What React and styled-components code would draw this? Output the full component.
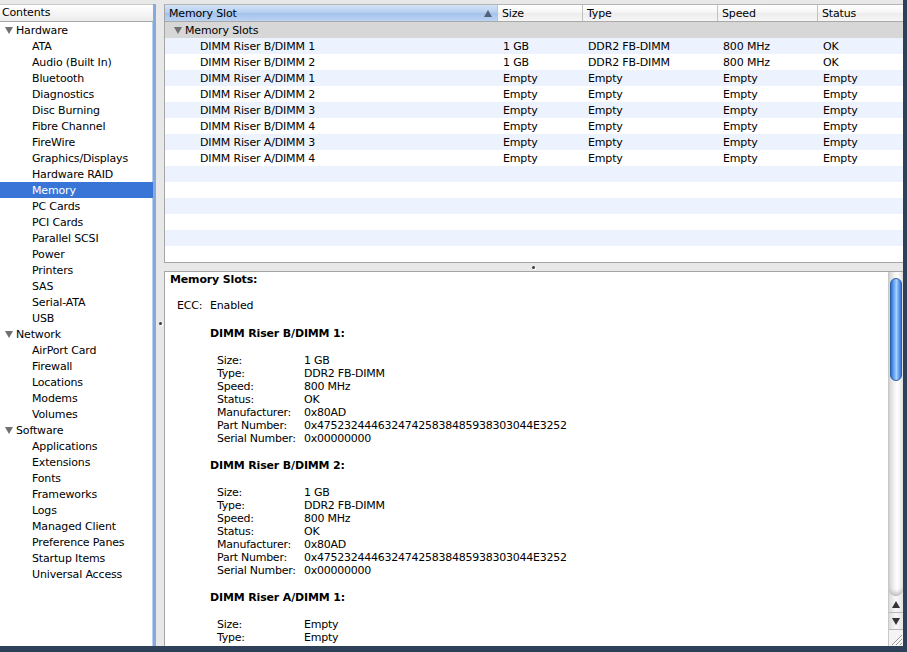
import React from 'react';
import styled, { createGlobalStyle } from 'styled-components';

const GlobalStyle = createGlobalStyle`
  html, body {
    margin: 0;
    padding: 0;
    background: #2f4158;
  }
  body {
    font-family: "DejaVu Sans", "Liberation Sans", sans-serif;
    font-size: 11px;
    letter-spacing: -0.15px;
    color: #000;
  }
`;

const contents = [
  {
    name: 'Hardware',
    items: [
      'ATA', 'Audio (Built In)', 'Bluetooth', 'Diagnostics', 'Disc Burning',
      'Fibre Channel', 'FireWire', 'Graphics/Displays', 'Hardware RAID', 'Memory',
      'PC Cards', 'PCI Cards', 'Parallel SCSI', 'Power', 'Printers', 'SAS',
      'Serial-ATA', 'USB',
    ],
  },
  { name: 'Network', items: ['AirPort Card', 'Firewall', 'Locations', 'Modems', 'Volumes'] },
  {
    name: 'Software',
    items: [
      'Applications', 'Extensions', 'Fonts', 'Frameworks', 'Logs', 'Managed Client',
      'Preference Panes', 'Startup Items', 'Universal Access',
    ],
  },
];

const columns = [
  { key: 'slot', label: 'Memory Slot', width: 333, sorted: true },
  { key: 'size', label: 'Size', width: 85 },
  { key: 'type', label: 'Type', width: 135 },
  { key: 'speed', label: 'Speed', width: 100 },
  { key: 'status', label: 'Status', width: 85 },
];

const slots = [
  { slot: 'DIMM Riser B/DIMM 1', size: '1 GB', type: 'DDR2 FB-DIMM', speed: '800 MHz', status: 'OK' },
  { slot: 'DIMM Riser B/DIMM 2', size: '1 GB', type: 'DDR2 FB-DIMM', speed: '800 MHz', status: 'OK' },
  { slot: 'DIMM Riser A/DIMM 1', size: 'Empty', type: 'Empty', speed: 'Empty', status: 'Empty' },
  { slot: 'DIMM Riser A/DIMM 2', size: 'Empty', type: 'Empty', speed: 'Empty', status: 'Empty' },
  { slot: 'DIMM Riser B/DIMM 3', size: 'Empty', type: 'Empty', speed: 'Empty', status: 'Empty' },
  { slot: 'DIMM Riser B/DIMM 4', size: 'Empty', type: 'Empty', speed: 'Empty', status: 'Empty' },
  { slot: 'DIMM Riser A/DIMM 3', size: 'Empty', type: 'Empty', speed: 'Empty', status: 'Empty' },
  { slot: 'DIMM Riser A/DIMM 4', size: 'Empty', type: 'Empty', speed: 'Empty', status: 'Empty' },
];

const EMPTY_ROWS = 6;

const details = [
  {
    title: 'DIMM Riser B/DIMM 1:',
    fields: [
      ['Size:', '1 GB'],
      ['Type:', 'DDR2 FB-DIMM'],
      ['Speed:', '800 MHz'],
      ['Status:', 'OK'],
      ['Manufacturer:', '0x80AD'],
      ['Part Number:', '0x47523244463247425838485938303044E3252'],
      ['Serial Number:', '0x00000000'],
    ],
  },
  {
    title: 'DIMM Riser B/DIMM 2:',
    fields: [
      ['Size:', '1 GB'],
      ['Type:', 'DDR2 FB-DIMM'],
      ['Speed:', '800 MHz'],
      ['Status:', 'OK'],
      ['Manufacturer:', '0x80AD'],
      ['Part Number:', '0x47523244463247425838485938303044E3252'],
      ['Serial Number:', '0x00000000'],
    ],
  },
  {
    title: 'DIMM Riser A/DIMM 1:',
    fields: [
      ['Size:', 'Empty'],
      ['Type:', 'Empty'],
      ['Speed:', 'Empty'],
      ['Status:', 'Empty'],
    ],
  },
];

const App = () => (
  <>
    <GlobalStyle />
    <Window>
      <Sidebar>
        <SidebarHeader>Contents</SidebarHeader>
        {contents.map((group) => (
          <React.Fragment key={group.name}>
            <SourceRow>
              <Disclosure />
              {group.name}
            </SourceRow>
            {group.items.map((item) => (
              <SourceRow key={item} indent selected={item === 'Memory'}>
                {item}
              </SourceRow>
            ))}
          </React.Fragment>
        ))}
      </Sidebar>

      <VSplitter>
        <Dimple />
      </VSplitter>

      <Main>
        <TablePanel>
          <HeaderRow>
            {columns.map((col) => (
              <HeaderCell key={col.key} width={col.width} sorted={col.sorted}>
                {col.label}
                {col.sorted && <SortArrow />}
              </HeaderCell>
            ))}
          </HeaderRow>
          <GroupRow>
            <Disclosure />
            Memory Slots
          </GroupRow>
          {slots.map((row, i) => (
            <DataRow key={row.slot} striped={i % 2 === 0}>
              {columns.map((col) => (
                <Cell key={col.key} width={col.width} first={col.key === 'slot'}>
                  {row[col.key]}
                </Cell>
              ))}
            </DataRow>
          ))}
          {Array.from({ length: EMPTY_ROWS }).map((_, i) => (
            <DataRow key={`empty-${i}`} striped={(slots.length + i) % 2 === 0} />
          ))}
        </TablePanel>

        <HSplitter>
          <Dimple />
        </HSplitter>

        <DetailPanel>
          <DetailBody>
            <DetailTitle>Memory Slots:</DetailTitle>
            <EccLine>
              <EccLabel>ECC:</EccLabel>Enabled
            </EccLine>
            {details.map((section) => (
              <Section key={section.title}>
                <SectionTitle>{section.title}</SectionTitle>
                <FieldGrid>
                  {section.fields.map(([label, value]) => (
                    <React.Fragment key={label}>
                      <span>{label}</span>
                      <span>{value}</span>
                    </React.Fragment>
                  ))}
                </FieldGrid>
              </Section>
            ))}
          </DetailBody>

          <Scrollbar>
            <Track>
              <Thumb />
            </Track>
            <ArrowButton>
              <ArrowGlyph up />
            </ArrowButton>
            <ArrowButton>
              <ArrowGlyph />
            </ArrowButton>
            <ResizeCorner>
              <svg width="14" height="16" viewBox="0 0 14 16">
                <path d="M3 15 L13 5 M7 15 L13 9 M11 15 L13 13" stroke="#9a9a9a" strokeWidth="1" />
                <path d="M4 15 L13 6 M8 15 L13 10" stroke="#ffffff" strokeWidth="1" />
              </svg>
            </ResizeCorner>
          </Scrollbar>
        </DetailPanel>
      </Main>
    </Window>
  </>
);

const Window = styled.div`
  display: flex;
  width: 903px;
  height: 646px;
  background: #e8e8e8;
  overflow: hidden;
`;

const Sidebar = styled.div`
  width: 153px;
  margin-top: 4px;
  background: #fff;
  border-right: 3px solid #86aadf;
  box-shadow: inset -1px 0 0 #b9cfee;
  flex-shrink: 0;
`;

const SidebarHeader = styled.div`
  height: 16px;
  line-height: 16px;
  padding-left: 2px;
  background: linear-gradient(#ffffff, #ececec);
  border-top: 1px solid #c9c9c9;
  border-bottom: 1px solid #a9a9a9;
`;

const SourceRow = styled.div`
  display: flex;
  align-items: center;
  height: 16px;
  padding-left: ${(p) => (p.indent ? '32px' : '5px')};
  background: ${(p) => (p.selected ? '#3875d7' : 'transparent')};
  color: ${(p) => (p.selected ? '#fff' : '#000')};
  white-space: nowrap;
`;

const Disclosure = styled.span`
  width: 0;
  height: 0;
  margin-right: 3px;
  border-left: 4px solid transparent;
  border-right: 4px solid transparent;
  border-top: 7px solid #707070;
`;

const VSplitter = styled.div`
  width: 8px;
  flex-shrink: 0;
  display: flex;
  align-items: center;
  justify-content: center;
`;

const HSplitter = styled.div`
  height: 8px;
  flex-shrink: 0;
  display: flex;
  align-items: center;
  justify-content: center;
`;

const Dimple = styled.span`
  width: 3px;
  height: 3px;
  border-radius: 50%;
  background: #3c3c3c;
  box-shadow: 1px 1px 0 #fff;
`;

const Main = styled.div`
  flex: 1;
  display: flex;
  flex-direction: column;
  padding-top: 4px;
  min-width: 0;
`;

const TablePanel = styled.div`
  height: 257px;
  background: #fff;
  border-top: 1px solid #b4b4b4;
  border-left: 1px solid #a5a5a5;
  border-bottom: 1px solid #a5a5a5;
  overflow: hidden;
  flex-shrink: 0;
`;

const HeaderRow = styled.div`
  display: flex;
  height: 16px;
  border-bottom: 1px solid #a9a9a9;
`;

const HeaderCell = styled.div`
  position: relative;
  width: ${(p) => p.width}px;
  flex-shrink: 0;
  box-sizing: border-box;
  padding: 1px 0 0 4px;
  line-height: 16px;
  border-right: 1px solid #c2c2c2;
  background: ${(p) =>
    p.sorted
      ? 'linear-gradient(#d4e3f7 0%, #b3cdef 50%, #a2c1ec 51%, #bcd4f3 100%)'
      : 'linear-gradient(#ffffff 0%, #f5f5f5 50%, #ececec 51%, #f6f6f6 100%)'};
  &:last-child {
    flex: 1;
    border-right: none;
  }
`;

const SortArrow = styled.span`
  position: absolute;
  right: 5px;
  top: 5px;
  width: 0;
  height: 0;
  border-left: 4px solid transparent;
  border-right: 4px solid transparent;
  border-bottom: 7px solid #4f6278;
`;

const GroupRow = styled.div`
  display: flex;
  align-items: center;
  height: 16px;
  padding-left: 9px;
  background: #d7d7d7;
`;

const DataRow = styled.div`
  display: flex;
  height: 16px;
  line-height: 17px;
  background: ${(p) => (p.striped ? '#edf3fe' : '#fff')};
`;

const Cell = styled.div`
  width: ${(p) => p.width}px;
  flex-shrink: 0;
  box-sizing: border-box;
  padding-left: ${(p) => (p.first ? '35px' : '5px')};
  white-space: nowrap;
  overflow: hidden;
`;

const DetailPanel = styled.div`
  flex: 1;
  display: flex;
  min-height: 0;
  background: #fff;
  border-top: 1px solid #a5a5a5;
  border-left: 1px solid #a5a5a5;
`;

const DetailBody = styled.div`
  flex: 1;
  padding: 1px 0 0 5px;
  line-height: 13px;
  overflow: hidden;
`;

const DetailTitle = styled.div`
  font-weight: bold;
`;

const EccLine = styled.div`
  margin: 13px 0 0 7px;
`;

const EccLabel = styled.span`
  display: inline-block;
  width: 33px;
`;

const Section = styled.div`
  margin: 15px 0 0 40px;
  & + & {
    margin-top: 14px;
  }
`;

const SectionTitle = styled.div`
  font-weight: bold;
  margin-bottom: 14px;
`;

const FieldGrid = styled.div`
  display: grid;
  grid-template-columns: 87px auto;
  margin-left: 7px;
  white-space: nowrap;
  letter-spacing: -0.25px;
`;

const Scrollbar = styled.div`
  width: 14px;
  flex-shrink: 0;
  display: flex;
  flex-direction: column;
  background: linear-gradient(90deg, #d6d6d6, #f4f4f4 40%, #ffffff 60%, #e2e2e2);
  border-left: 1px solid #c8c8c8;
`;

const Track = styled.div`
  position: relative;
  flex: 1;
  border-bottom: 1px solid #b8b8b8;
  border-radius: 0 0 7px 7px;
  box-shadow: inset 0 -4px 4px -2px #bdbdbd;
`;

const Thumb = styled.div`
  position: absolute;
  left: 1px;
  right: 1px;
  top: 6px;
  height: 103px;
  border-radius: 6px;
  border: 1px solid #2c5ea8;
  box-sizing: border-box;
  background: linear-gradient(90deg, #2f6fd2 0%, #6aa6f3 30%, #a8d0ff 55%, #5b99ec 80%, #3374d6 100%);
`;

const ArrowButton = styled.div`
  height: 16px;
  display: flex;
  align-items: center;
  justify-content: center;
  border-bottom: 1px solid #b8b8b8;
  background: linear-gradient(90deg, #dcdcdc, #f8f8f8 50%, #e4e4e4);
`;

const ArrowGlyph = styled.span`
  width: 0;
  height: 0;
  border-left: 4px solid transparent;
  border-right: 4px solid transparent;
  ${(p) => (p.up ? 'border-bottom: 7px solid #333;' : 'border-top: 7px solid #333;')}
`;

const ResizeCorner = styled.div`
  height: 16px;
  background: #f4f4f4;
  display: flex;
`;

export default App;
